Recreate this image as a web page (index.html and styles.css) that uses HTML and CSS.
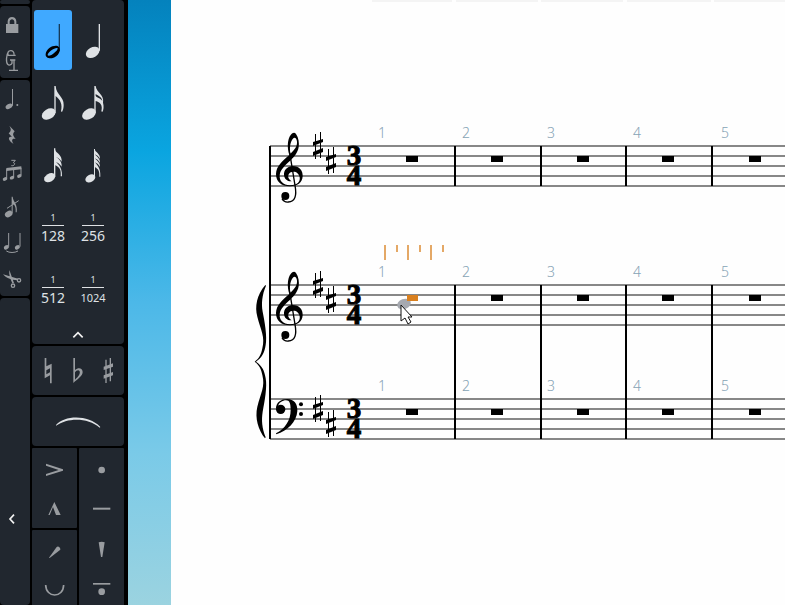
FILE: index.html
```html
<!DOCTYPE html>
<html lang="en">
<head>
<meta charset="utf-8">
<title>Score editor</title>
<link rel="stylesheet" href="styles.css">
</head>
<body>
<div class="app">
  <nav class="tools" aria-label="Note tools">
    <div class="panel stub"></div>
    <div class="panel">
      <button class="tool" aria-label="Lock duration"><svg viewBox="0 18 90 108"><path d="M18 72h5v-8c0-17 26-17 26 0v8h6v27H18ZM29 72h14v-7c0-10-14-10-14 0Z" fill-rule="evenodd"/></svg></button>
      <button class="tool" aria-label="Chord mode"><svg viewBox="0 126 90 108"><g class="line bold"><path d="M42 164C43 155 37 151 31 152C23 153 22 160 25 166H47M25 156C18 165 18 188 23 193C27 197 34 195 36 190V180M30 180H46M42 180V211M27 211H54"/></g></svg></button>
    </div>
    <div class="panel">
      <button class="tool" aria-label="Dotted note"><svg viewBox="0 240 90 108"><ellipse cx="27" cy="319" rx="11" ry="7" transform="rotate(-30 27 319)"/><path d="M36 267h3v50h-3Z"/><circle cx="52" cy="315" r="3"/></svg></button>
      <button class="tool" aria-label="Rest"><svg viewBox="0 348 90 108"><path d="M28 377L44 394C37 402 38 406 47 417C36 413 33 421 41 432C23 422 23 408 36 411L26 400C34 393 34 387 28 377Z"/></svg></button>
      <button class="tool" aria-label="Tuplet"><svg viewBox="0 456 90 108"><g class="line"><path d="M20 536V508L63 503V526M41 532V506"/><path d="M34 481L46 481L40 488C48 489 43 499 34 497"/></g><path d="M19 504L64 499V508L19 513Z"/><ellipse cx="15" cy="537" rx="7" ry="5" transform="rotate(-25 15 537)"/><ellipse cx="36" cy="533" rx="7" ry="5" transform="rotate(-25 36 533)"/><ellipse cx="58" cy="528" rx="7" ry="5" transform="rotate(-25 58 528)"/></svg></button>
      <button class="tool" aria-label="Grace note"><svg viewBox="0 564 90 108"><ellipse cx="26" cy="642" rx="12" ry="9" transform="rotate(-30 26 642)"/><path d="M35 590h3C39 605 54 612 50 637H47C48 620 44 615 38 611V640H35Z"/><g class="line"><path d="M21 625L56 602"/></g></svg></button>
      <button class="tool" aria-label="Tie"><svg viewBox="0 672 90 108"><ellipse cx="19" cy="742" rx="8" ry="6" transform="rotate(-30 19 742)"/><ellipse cx="52" cy="742" rx="8" ry="6" transform="rotate(-30 52 742)"/><g class="line"><path d="M26 699V740M60 699V740M19 753C28 759 44 759 54 753"/></g></svg></button>
      <button class="tool" aria-label="Scissors"><svg viewBox="0 780 90 108"><path d="M28 810L42 849L37 850C31 836 26 824 28 810ZM9 823L54 836L52 841C34 840 18 834 9 823Z"/><g class="line bold"><circle cx="39" cy="857" r="5"/><circle cx="57" cy="841" r="5"/></g></svg></button>
    </div>
    <div class="panel rest">
      <button class="collapse" aria-label="Collapse panel"><svg viewBox="0 0 30 30"><path class="chevron" d="M21 2L9 15L21 28"/></svg></button>
    </div>
  </nav>

  <aside class="palette" aria-label="Notes panel">
    <section class="panel">
      <div class="notes">
        <button class="note selected" aria-label="Half note" aria-pressed="true"><svg viewBox="102 30 114 180"><path fill-rule="evenodd" d="M137 162C139 145 160 134 173 138C188 147 175 171 156 175C142 176 136 170 137 162ZM143 166C148 173 174 153 173 145C167 141 142 157 143 166Z"/><path d="M176 72h4v82h-4Z" opacity=".65"/></svg></button>
        <button class="note" aria-label="Quarter note"><svg viewBox="222 30 114 180"><ellipse cx="278" cy="157" rx="22" ry="15" transform="rotate(-30 278 157)"/><path d="M296 72h4v80h-4Z"/></svg></button>
        <button class="note" aria-label="Eighth note"><svg viewBox="102 216 114 180"><ellipse cx="146" cy="342" rx="22" ry="15" transform="rotate(-30 146 342)"/><path d="M163 258h4C169 286 192 289 191 315C191 324 189 331 186 336L183 334C188 313 181 299 167 288V340H163Z"/></svg></button>
        <button class="note" aria-label="Sixteenth note"><svg viewBox="222 216 114 180"><ellipse cx="267" cy="342" rx="22" ry="15" transform="rotate(-30 267 342)"/><path d="M283 258h4C290 279 314 284 309 308C312 318 311 330 307 336L304 334C309 315 300 306 287 303V340H283ZM287 282V287C289 293 302 294 307 303C306 292 295 287 287 282Z" fill-rule="evenodd"/></svg></button>
        <button class="note" aria-label="Thirty-second note"><svg viewBox="102 402 114 180"><ellipse cx="149" cy="533" rx="18" ry="12" transform="rotate(-30 149 533)"/><path d="M162 445h4v85h-4Z"/><path id="flag" d="M164 447C168 461 187 463 185 485C179 475 172 472 164 470Z"/><use href="#flag" y="15"/><path d="M164 477C168 491 188 496 186 529H182C184 509 179 501 164 495Z"/></svg></button>
        <button class="note" aria-label="Sixty-fourth note"><svg viewBox="222 402 114 180"><ellipse cx="271" cy="535" rx="16" ry="11" transform="rotate(-30 271 535)"/><path d="M282 447h3v85h-3Z"/><path id="flag64" d="M284 448C287 458 301 461 300 477C296 469 290 465 284 463Z"/><use href="#flag64" y="12"/><use href="#flag64" y="24"/><path d="M284 484C288 495 303 500 301 530H298C299 515 296 507 284 501Z"/></svg></button>
        <button class="note"><span class="over">1</span><span class="under">128</span></button>
        <button class="note"><span class="over">1</span><span class="under">256</span></button>
        <button class="note"><span class="over">1</span><span class="under">512</span></button>
        <button class="note"><span class="over">1</span><span class="under small">1024</span></button>
      </div>
      <button class="fold" aria-label="Show fewer notes"><svg viewBox="0 0 36 30"><path class="chevron" d="M4 22L18 8L32 22"/></svg></button>
    </section>
    <section class="panel row">
      <button class="accidental" aria-label="Natural"><svg viewBox="99 1038 90 147"><path fill-rule="evenodd" d="M134 1074h5v25l16-8v59h-5v-24l-16 9ZM139 1111v12l11-6v-12Z"/></svg></button>
      <button class="accidental" aria-label="Flat"><svg viewBox="189 1038 90 147"><path fill-rule="evenodd" d="M220 1074h5v36C236 1100 248 1105 248 1116C248 1129 232 1137 220 1149ZM225 1117V1139C237 1129 241 1121 239 1114C236 1108 229 1111 225 1117Z"/></svg></button>
      <button class="accidental" aria-label="Sharp"><svg viewBox="279 1038 90 147"><path d="M316 1079h4v70h-4ZM329 1074h4v70h-4ZM311 1100L339 1090V1100L311 1110ZM311 1126L339 1116V1126L311 1136Z"/></svg></button>
    </section>
    <section class="panel row">
      <button class="slur" aria-label="Slur"><svg viewBox="99 1191 270 147"><path d="M168 1275C194 1246 264 1243 301 1281L299 1283C264 1252 203 1252 168 1277Z"/></svg></button>
    </section>
    <section class="articulations">
      <div class="stack">
        <div class="panel">
          <button class="mark" aria-label="Accent"><svg viewBox="96 1344 135 120"><path d="M138 1391L189 1408V1412L138 1428V1422L176 1410L138 1397Z"/></svg></button>
          <button class="mark" aria-label="Marcato"><svg viewBox="96 1464 135 120"><path d="M163 1506L182 1545H168L159 1521L149 1545H145Z"/></svg></button>
        </div>
        <div class="panel grow">
          <button class="mark" aria-label="Stress"><svg viewBox="96 1590 135 120"><path d="M147 1673L170 1641C174 1636 182 1643 181 1649L149 1674Z"/></svg></button>
          <button class="mark" aria-label="Unstress"><svg viewBox="96 1710 135 120"><path class="thick" d="M137 1755C138 1795 190 1795 191 1755"/></svg></button>
        </div>
      </div>
      <div class="stack">
        <div class="panel grow">
          <button class="mark" aria-label="Staccato"><svg viewBox="237 1344 135 120"><circle cx="305" cy="1410" r="10"/></svg></button>
          <button class="mark" aria-label="Tenuto"><svg viewBox="237 1464 135 120"><path d="M279 1523h52v6h-52Z"/></svg></button>
          <button class="mark" aria-label="Staccatissimo"><svg viewBox="237 1584 135 120"><path d="M296 1627Q305 1624 314 1627L307 1671H303Z"/></svg></button>
          <button class="mark" aria-label="Tenuto staccato"><svg viewBox="237 1704 135 120"><path d="M279 1749h52v5h-52Z"/><circle cx="305" cy="1775" r="10"/></svg></button>
        </div>
      </div>
    </section>
  </aside>

  <div class="backdrop"></div>

  <main class="page">
    <svg class="score" role="img" aria-label="Three staves in D major, three four time">
      <defs>
        <g id="staff">
          <path class="staff-line" d="M270 0H2400M270 10H2400M270 20H2400M270 30H2400M270 40H2400"/>
        </g>
        <g id="sharp">
          <path d="M-3-12h1v25h-1ZM2-14h1v26h-1ZM-5-4L5-7V-4L-5 0ZM-5 6L5 2V6L-5 10Z"/>
        </g>
        <g id="treble" transform="scale(.33333)">
          <path fill-rule="evenodd" d="M118 27C111 6 112-20 122-33C128-41 134-42 138-36C146-25 148-8 146 3C143 21 133 31 122 43C106 58 91 70 89 88C88 106 99 117 120 118C144 118 151 106 149 94C147 83 139 77 131 77C117 77 112 88 116 97C118 101 121 104 125 106C112 107 103 99 102 87C101 72 112 61 128 60C148 60 159 74 158 91C157 111 142 121 120 121C94 121 78 107 78 84C79 60 96 46 118 27ZM121 23C134 11 142 0 141-13C140-24 134-27 130-23C121-14 118 3 121 23Z"/>
          <path class="clef-stem" d="M119 20L135 118C141 150 135 167 115 168C108 169 100 165 96 158"/>
          <circle cx="106" cy="150" r="12"/>
        </g>
        <g id="bass" transform="scale(.33333)">
          <circle cx="92" cy="31" r="14"/>
          <path d="M78 29C78 10 93 0 112 0C132 1 143 14 142 36C140 69 112 95 79 106L78 103C105 88 122 65 122 32C122 14 119 4 108 4C98 4 86 10 83 25Z"/>
          <circle cx="153" cy="16" r="6"/><circle cx="153" cy="45" r="6"/>
        </g>
        <g id="rests">
          <path d="M491 10h12v6h-12ZM577 10h12v6h-12ZM662 10h12v6h-12ZM749 10h12v6h-12Z"/>
        </g>
        <g id="meter" class="meter"><text x="354" y="19">3</text><text x="354" y="39">4</text></g>
        <g id="numbers" class="numbers"><text x="378" y="0">1</text><text x="462" y="0">2</text><text x="547" y="0">3</text><text x="633" y="0">4</text><text x="721" y="0">5</text></g>
      </defs>
      <g transform="translate(-171 0)">
        <path class="tabs" d="M372 0h80v2h-80ZM456 0h82v2h-82ZM541 0h82v2h-82ZM627 0h84v2h-84ZM714 0h84v2h-84Z"/>
        <use href="#staff" y="146"/><use href="#staff" y="285"/><use href="#staff" y="399"/>
        <path class="barline" d="M270 146V439M455 146V186M541 146V186M626 146V186M712 146V186M455 285V439M541 285V439M626 285V439M712 285V439"/>
        <g transform="translate(250 280) scale(.33333)"><path d="M46 15C20 45 14 80 22 110C32 150 46 170 37 205C34 222 28 235 14 245C28 255 34 268 37 285C46 320 32 340 22 380C14 415 25 450 45 475L47 472C36 445 34 420 38 395C44 365 52 320 47 295C43 270 36 258 18 245C36 232 43 220 47 195C52 170 44 125 38 95C34 70 36 45 48 17Z"/></g>
        <use href="#treble" x="250" y="146"/><use href="#treble" x="250" y="285"/><use href="#bass" x="250" y="399"/>
        <use href="#sharp" x="318" y="146"/><use href="#sharp" x="331" y="161"/>
        <use href="#sharp" x="318" y="285"/><use href="#sharp" x="331" y="300"/>
        <use href="#sharp" x="318" y="409"/><use href="#sharp" x="331" y="424"/>
        <use href="#meter" y="146"/><use href="#meter" y="285"/><use href="#meter" y="399"/>
        <use href="#rests" y="146"/><use href="#rests" y="285"/><use href="#rests" y="399"/>
        <path d="M406 156h12v6h-12ZM406 409h12v6h-12Z"/>
        <use href="#numbers" y="138"/><use href="#numbers" y="277"/><use href="#numbers" y="391"/>
        <path class="beats" d="M385 245V260M397 245V252M408 245V260M420 245V252M431 245V260M443 245V252"/>
        <ellipse class="shadow-note" cx="404" cy="304" rx="7" ry="5" transform="rotate(-20 404 304)"/>
        <path class="active-rest" d="M407 295h11v6h-11Z"/>
        <path class="pointer" d="M401 305V321L405 318L408 324L411 322L408 317H412Z"/>
      </g>
    </svg>
  </main>
</div>
</body>
</html>
```
FILE: styles.css
```css
* {
  box-sizing: border-box;
}

body {
  margin: 0;
  background: #000;
  font-family: "Noto Sans", sans-serif;
}

button {
  display: block;
  margin: 0;
  padding: 0;
  border: 0;
  background: none;
  color: inherit;
  font: inherit;
}

svg {
  display: block;
  fill: currentColor;
}

.app {
  display: flex;
  height: 100vh;
  overflow: hidden;
}

.panel {
  flex: none;
  border-radius: 4px;
  background: #21272f;
}

/* Narrow tool strip */
.tools {
  display: flex;
  flex: none;
  flex-direction: column;
  gap: 2px;
  width: 30px;
  color: #999ca0;
}

.stub {
  height: 4px;
}

.tool svg {
  width: 30px;
  height: 36px;
}

.rest {
  display: flex;
  flex: 1;
  flex-direction: column;
  justify-content: flex-end;
  padding: 0 0 81px 7px;
}

.collapse svg {
  width: 10px;
  height: 10px;
}

.line {
  fill: none;
  stroke: currentColor;
  stroke-width: 3;
}

.bold {
  stroke-width: 4;
}

.chevron {
  fill: none;
  stroke: #f2f2f2;
  stroke-width: 5;
}

/* Notes palette */
.palette {
  display: flex;
  flex: none;
  flex-direction: column;
  gap: 2px;
  width: 92px;
  margin: 0 4px 0 2px;
  color: #999ca0;
}

.notes {
  display: grid;
  grid-template-columns: 38px 38px;
  gap: 2px;
  padding: 10px 2px 0;
  color: #dfe2e5;
}

.note {
  display: flex;
  flex-direction: column;
  align-items: center;
  justify-content: center;
  height: 60px;
  border-radius: 3px;
}

.note svg {
  width: 38px;
  height: 60px;
}

.selected {
  background: #40a9ff;
  color: #000;
}

.over {
  width: 22px;
  margin-top: 4px;
  padding-bottom: 1px;
  border-bottom: 1px solid currentColor;
  font-size: 9px;
  line-height: 13px;
}

.under {
  font-size: 14px;
  line-height: 20px;
}

.small {
  font-size: 11px;
}

.fold {
  display: flex;
  align-items: center;
  justify-content: center;
  width: 100%;
  height: 26px;
  padding-top: 8px;
}

.fold svg {
  width: 12px;
  height: 10px;
}

.row {
  display: flex;
  justify-content: center;
}

.accidental svg {
  width: 30px;
  height: 49px;
}

.slur {
  color: #dfe2e5;
}

.slur svg {
  width: 90px;
  height: 49px;
}

.articulations {
  display: grid;
  flex: 1;
  grid-template-columns: 1fr 1fr;
  gap: 2px;
}

.stack {
  display: flex;
  flex-direction: column;
  gap: 2px;
}

.stack .panel {
  border-radius: 1px;
}

.stack .grow {
  flex: 1;
}

.mark svg {
  width: 45px;
  height: 40px;
}

.thick {
  fill: none;
  stroke: currentColor;
  stroke-width: 5;
}

/* Workspace behind the page */
.backdrop {
  flex: none;
  width: 43px;
  background: linear-gradient(#0482bd, #0aa5e0 25%, #4cb8e8 50%, #7acae8 75%, #9bd3e0);
}

/* Score */
.page {
  flex: 1;
  min-width: 0;
  background: #fefefe;
  color: #000;
}

.score {
  width: 100%;
  height: 100%;
}

.staff-line {
  stroke: #111;
  stroke-width: 1.2;
}

.barline {
  fill: none;
  stroke: #000;
  stroke-width: 2;
}

.clef-stem {
  fill: none;
  stroke: #000;
  stroke-width: 4;
}

.meter {
  stroke: #000;
  stroke-width: 1;
  font-family: "Liberation Serif", serif;
  font-size: 29px;
  font-weight: 700;
  text-anchor: middle;
}

.numbers {
  fill: #86a3b5;
  font-size: 14px;
  font-weight: 300;
}

.tabs {
  fill: #f4f4f4;
}

.beats {
  fill: none;
  stroke: #dc8c35;
  stroke-width: 1.5;
}

.shadow-note {
  fill: #a6a9b0;
}

.active-rest {
  fill: #d9801f;
}

.pointer {
  fill: #fff;
  stroke: #111;
  stroke-width: 1;
}
```
